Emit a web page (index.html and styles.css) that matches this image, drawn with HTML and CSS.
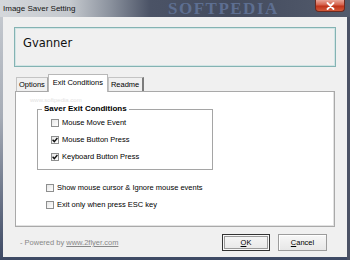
FILE: index.html
```html
<!DOCTYPE html>
<html lang="en">
<head>
    <meta charset="UTF-8">
    <title>Image Saver Setting</title>
    <link rel="stylesheet" href="styles.css">
</head>
<body>

<div class="window">
    <div class="titlebar">
        <span class="title">Image Saver Setting</span>
        <span class="watermark">SOFTPEDIA</span>
        <span class="close">
            <svg width="9" height="8" viewBox="0 0 9 8"><path d="M1.5 1 L7.5 7 M7.5 1 L1.5 7" stroke="#fff" stroke-width="1.8" stroke-linecap="round"/></svg>
        </span>
    </div>

    <div class="client">
        <div class="banner">Gvanner</div>

        <div class="tabs">
            <span class="tab">Options</span>
            <span class="tab active">Exit Conditions</span>
            <span class="tab last">Readme</span>
        </div>

        <div class="panel">
            <span class="site-mark">www.softpedia.com</span>
            <fieldset class="group">
                <legend>Saver Exit Conditions</legend>
                <label class="check"><span class="box"></span>Mouse Move Event</label>
                <label class="check"><span class="box checked"><svg width="6" height="6" viewBox="0 0 6 6"><path d="M0.6 2.8 L2.3 4.6 L5.4 1" fill="none" stroke="#111" stroke-width="1.4"/></svg></span>Mouse Button Press</label>
                <label class="check"><span class="box checked"><svg width="6" height="6" viewBox="0 0 6 6"><path d="M0.6 2.8 L2.3 4.6 L5.4 1" fill="none" stroke="#111" stroke-width="1.4"/></svg></span>Keyboard Button Press</label>
            </fieldset>
            <div class="options">
                <label class="check"><span class="box"></span>Show mouse cursor &amp; Ignore mouse events</label>
                <label class="check"><span class="box"></span>Exit only when press ESC key</label>
            </div>
        </div>

        <div class="footer">
            <span class="powered">- Powered by <a href="#">www.2flyer.com</a></span>
            <div class="buttons">
                <button class="btn btn-default"><u>O</u>K</button>
                <button class="btn btn-cancel"><u>C</u>ancel</button>
            </div>
        </div>
    </div>
</div>

</body>
</html>
```

FILE: styles.css
```css
html, body {
    margin: 0;
    padding: 0;
}
body {
    width: 350px;
    height: 260px;
    overflow: hidden;
    font-family: "Liberation Sans", Arial, sans-serif;
    font-size: 7.5px;
    color: #000;
}
.window {
    height: 260px;
    display: flex;
    flex-direction: column;
    background: linear-gradient(to bottom, #c8ccd2 0%, #a6acb6 45%, #3d4964 100%);
    box-shadow: inset -3px 0 0 #4b5265;
}
.titlebar {
    height: 17px;
    position: relative;
    display: flex;
    align-items: center;
    overflow: hidden;
    background: linear-gradient(to right, #d4d7db 0, #c5c9ce 70px, #8b929e 110px, #4b5366 150px, #434b5e 230px, #535b6c 100%);
}
.title {
    margin-left: 3px;
    font-size: 8px;
    color: #141414;
}
.watermark {
    position: absolute;
    left: 168px;
    top: 0;
    font-family: "Liberation Serif", serif;
    font-weight: bold;
    font-size: 17px;
    line-height: 17px;
    letter-spacing: 1.5px;
    color: #62759a;
    opacity: 0.85;
}
.close {
    margin-left: auto;
    margin-right: 5px;
    align-self: flex-start;
    width: 30px;
    height: 12px;
    box-sizing: border-box;
    display: flex;
    align-items: center;
    justify-content: center;
    background: linear-gradient(to bottom, #e9a699 0%, #d5604a 45%, #bf331b 55%, #d35a3a 100%);
    border: 1px solid #6c2a20;
    border-top: none;
    border-radius: 0 0 4px 4px;
    position: relative;
}
.client {
    flex: 1;
    margin: 0 3px 3px;
    padding: 10px 11px 0;
    background: #f0f0f0;
    display: flex;
    flex-direction: column;
}
.banner {
    height: 40px;
    box-sizing: border-box;
    border: 1px solid #84b3b3;
    box-shadow: inset 0 0 0 1px #d2e5e5;
    padding: 8px 0 0 8px;
    font-family: "DejaVu Sans", sans-serif;
    font-size: 11.5px;
    color: #111;
}
.tabs {
    margin: 7px 1px 0;
    padding-left: 1px;
    height: 17px;
    display: flex;
    align-items: flex-end;
}
.tab {
    height: 14px;
    line-height: 13px;
    box-sizing: border-box;
    padding: 0 2px;
    border: 1px solid #c4c4c4;
    border-bottom: none;
    border-right-color: #a8a8a8;
    background: #f0f0f0;
}
.tab.active {
    height: 18px;
    line-height: 15px;
    margin-bottom: -1px;
    padding: 0 4px;
    background: #fff;
    border-color: #b8b8b8;
    position: relative;
    z-index: 1;
}
.tab.last {
    padding: 0 3px 0 2px;
    border-right: 2px solid #7c7c7c;
}
.panel {
    margin: 0 1px;
    height: 136px;
    box-sizing: border-box;
    border: 1px solid #a9a9a9;
    box-shadow: inset -1px -1px 0 #e2e2e2;
    background: #fff;
    position: relative;
}
.site-mark {
    position: absolute;
    left: 14px;
    top: 5px;
    font-size: 6px;
    color: #e3e3e3;
}
.group {
    width: 176px;
    box-sizing: border-box;
    margin: 12px 0 0 21px;
    padding: 0 0 4px 4px;
    border: 1px solid #a5a5a5;
    min-width: 0;
}
.group legend {
    padding: 0 2px;
    font-weight: bold;
    font-size: 8px;
    line-height: 10px;
}
.group .check {
    margin-left: 9px;
}
.check {
    display: flex;
    align-items: center;
    gap: 3px;
    height: 17px;
}
.box {
    width: 8px;
    height: 8px;
    box-sizing: border-box;
    border: 1px solid #8e8f8f;
    background: linear-gradient(135deg, #e6e6e6, #fff);
    display: flex;
    align-items: center;
    justify-content: center;
}
.options {
    margin: 9px 0 0 30px;
}
.footer {
    margin-top: 7px;
    height: 17px;
    display: flex;
    align-items: center;
}
.powered {
    margin-left: 6px;
    color: #888;
}
.powered a {
    color: #888;
    text-decoration: underline;
}
.buttons {
    margin-left: auto;
    margin-right: 9px;
    display: flex;
    gap: 8px;
}
.btn {
    height: 17px;
    width: 48px;
    box-sizing: border-box;
    padding: 0;
    font-family: inherit;
    font-size: 7.5px;
    color: #000;
    background: linear-gradient(to bottom, #f7f7f7, #e7e7e7);
    border: 1px solid #9c9c9c;
    box-shadow: inset 1px 1px 0 #fff;
}
.btn-default {
    border-color: #333;
    box-shadow: inset 0 0 0 1px #f8f8f8, inset 0 0 0 2px #9a9a9a;
}
.btn-cancel {
    width: 49px;
}
```
